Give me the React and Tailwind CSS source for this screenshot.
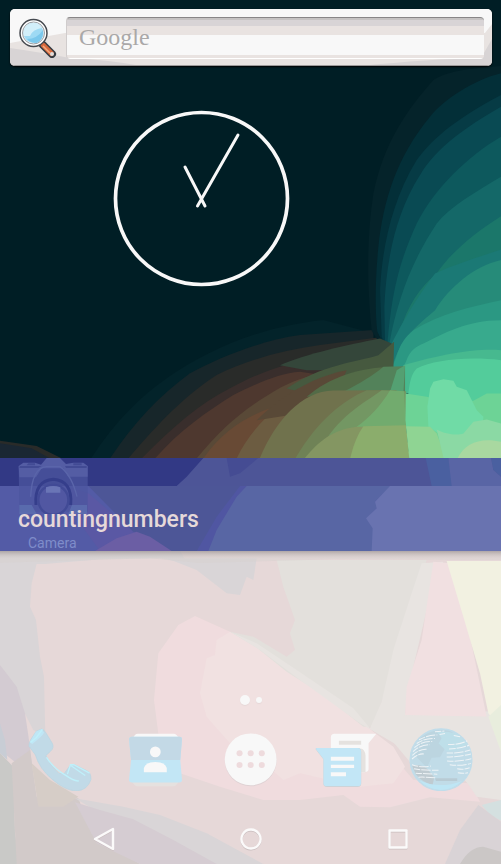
import React from "react";

const teal = [
  ["#05232a", "M603 18 C500 26 440 34 400 60 C320 150 250 250 220 400 C195 560 205 720 215 812 L290 930 L603 860Z"],
  ["#032f38", "M603 40 C520 60 430 120 390 170 C290 290 250 420 235 560 C225 660 225 760 232 815 L290 930 L603 860Z"],
  ["#063b45", "M603 105 C480 170 400 230 350 300 C270 430 245 580 240 690 L245 830 L290 930 L603 860Z"],
  ["#094a53", "M603 140 C500 200 410 260 360 345 C280 470 258 620 253 740 L255 850 L290 930 L603 860Z"],
  ["#0d595d", "M603 230 C500 290 400 390 350 490 C290 620 273 720 262 850 L290 930 L603 880Z"],
  ["#146868", "M603 350 C520 400 450 440 410 490 C330 610 290 730 268 850 L290 930 L603 900Z"],
  ["#1b776a", "M603 468 C520 520 450 580 410 640 C360 680 320 740 300 815 L603 880Z"],
  ["#1b7975", "M603 568 C540 590 470 610 405 640 C350 710 300 800 275 850 L275 925 L603 920Z"],
  ["#268b79", "M603 600 C520 620 450 680 405 750 C360 790 300 830 275 925 L603 930Z"],
  ["#2b9883", "M603 720 C510 740 420 760 340 810 C290 850 295 890 275 922 L603 930Z"],
  ["#38aa8d", "M603 780 C500 780 430 820 370 850 C320 870 325 900 310 918 L603 940Z"],
  ["#47b98f", "M603 870 C520 865 440 880 310 915 L308 1000 L603 1000Z"],
  ["#53cc9b", "M603 900 C500 888 400 900 350 925 C325 950 325 1000 318 1080 L330 1200 L603 1200Z"],
];

const earth = [
  ["#03232a", "M270 420 C340 310 420 230 500 175 C620 90 780 20 970 0 L1120 40 V420Z"],
  ["#17262a", "M330 415 C400 310 480 225 570 160 C660 110 790 60 900 45 L1120 30 V415Z"],
  ["#292b29", "M385 415 C450 340 540 235 650 165 C740 120 850 90 960 75 L1150 50 V415Z"],
  ["#392e2c", "M425 415 C520 320 600 250 690 205 C780 155 860 130 960 110 L1130 85 V415Z"],
  ["#4e382f", "M465 415 C540 330 620 275 700 225 C780 185 840 160 900 155 L1000 170 L900 415Z"],
  ["#594937", "M590 415 C660 330 720 275 820 215 C880 180 960 150 1080 145 L1060 415Z"],
  ["#684a35", "M610 415 C670 330 740 290 810 265 L940 210 L890 415Z"],
  ["#6c5c41", "M710 415 C750 330 830 250 900 225 L1010 185 L940 415Z"],
];

const junction = [
  ["#34463a", "M-60 915 C20 880 140 855 240 835 L275 850 L260 930 L20 930Z"],
  ["#46593f", "M-40 985 C60 915 170 905 235 885 L282 845 L280 930 L150 1000 L20 1000Z"],
  ["#594937", "M-130 1080 C-40 990 60 945 140 930 L110 1000 L0 1060Z"],
  ["#536b47", "M20 1010 C90 950 180 922 278 920 L285 1000Z"],
  ["#53825a", "M130 995 C180 970 220 945 250 920 L315 918 L315 1000Z"],
  ["#54a072", "M270 995 L290 930 L315 915 L310 1000Z"],
  ["#70724d", "M-125 1205 C-80 1090 0 993 100 991 L250 990 L200 1080 L90 1205Z"],
  ["#6f8256", "M-20 1205 C50 1080 130 1020 200 990 L290 990 L240 1110 L90 1205Z"],
  ["#739763", "M60 1170 C110 1070 190 1030 245 990 L318 993 L318 1110 L120 1200Z"],
  ["#72ab6e", "M170 1100 C210 1070 240 1040 270 990 L312 993 L318 1110 L180 1120Z"],
  ["#849662", "M5 1205 C50 1150 90 1110 170 1100 L220 1100 L200 1205Z"],
  ["#8bad6c", "M148 1205 C160 1150 175 1120 190 1098 L318 1095 L330 1205Z"],
  ["#6dd396", "M317 1000 L380 1010 L430 1020 L520 1022 L560 1000 L603 1000 V1200 H330 L316 1080Z"],
  ["#70dba6", "M385 1100 L382 1040 L390 985 L400 965 L430 957 L460 962 L470 980 L500 990 L515 1020 L530 1050 L550 1070 L545 1120 L430 1130Z"],
  ["#8fd493", "M318 1098 L390 1100 L410 1120 L440 1200 H328Z"],
  ["#8bd9a4", "M410 1108 C440 1125 475 1125 490 1120 L520 1085 L560 1078 L603 1090 V1200 H432Z"],
  ["#a9d8a0", "M470 1200 C490 1150 540 1130 603 1145 V1200Z"],
];

function NightWallpaper() {
  return (
    <svg aria-hidden="true" className="absolute inset-0 h-full w-full" viewBox="0 0 501 458" preserveAspectRatio="none">
      <rect width="501" height="458" fill="#001e25" />
      <g transform="translate(0 320) scale(.3334)">
        {earth.map(([c, d]) => <path key={c} fill={c} d={d} />)}
        <path fill="#292b29" d="M0 362 L110 378 L185 415 H0Z" />
        <path fill="#1a2733" d="M0 370 L95 385 L150 415 H0Z" />
      </g>
      <g transform="translate(300 60) scale(.3335)">
        {teal.map(([c, d]) => <path key={c} fill={c} d={d} />)}
        {junction.map(([c, d]) => <path key={c} fill={c} d={d} />)}
      </g>
    </svg>
  );
}

function DayWallpaper() {
  return (
    <svg aria-hidden="true" className="absolute inset-0 h-full w-full" viewBox="0 3 1503 939" preserveAspectRatio="none">
      <defs>
        <linearGradient id="bannerShadow" x2="0" y2="1">
          <stop stopColor="#8f8787" stopOpacity=".6" />
          <stop offset="1" stopColor="#c9c2c1" stopOpacity="0" />
        </linearGradient>
      </defs>
      <rect width="1503" height="942" fill="#e6d8d8" />
      <path fill="#d9d5d7" d="M0 0 H540 L560 40 L110 42 L95 100 L90 170 L108 210 L120 320 L132 380 L136 560 L100 540 L0 345Z" />
      <path fill="#e6d8d8" d="M110 44 L300 28 L480 25 L560 40 L620 90 H100Z" />
      <path fill="#d3cbd2" d="M0 345 L50 410 L75 490 L90 590 L100 680 L0 600Z" />
      <path fill="#c8cdd5" d="M0 520 L15 570 L22 630 L0 610Z" />
      <path fill="#c9c9c7" d="M0 610 L40 650 L45 850 L60 942 H0Z" />
      <path fill="#d2cac9" d="M35 640 L90 600 L110 740 L235 745 L275 850 L420 942 H50Z" />
      <path fill="#d6cdc7" d="M95 640 L150 690 L235 740 L190 770 L115 770Z" />
      <path fill="#d9d5d7" d="M225 745 L370 770 L480 795 L620 850 L790 942 H560 L400 850Z" />
      <path fill="#d5ccd2" d="M225 757 L300 780 L400 808 L520 870 L650 942 H420 L290 880Z" />
      <path fill="#d9d5d7" d="M500 25 H770 L760 90 L740 80 L720 135 L680 130 L590 60Z" />
      <path fill="#f0dcde" d="M585 198 L690 245 L900 390 L1110 535 L1240 690 L1410 700 L1440 755 L1290 742 L1170 772 L1080 770 L1030 735 L900 750 L790 750 L660 710 L540 670 L480 590 L462 450 L475 310 L535 225Z" />
      <path fill="#f1e1e1" d="M690 245 L790 305 L960 425 L1100 530 L1180 590 L1215 650 L1180 700 L1080 710 L990 690 L900 670 L850 690 L760 610 L690 580 L620 500 L600 430 L620 325 L645 315 L650 270Z" />
      <path fill="#e3e0dc" d="M830 30 H1280 L1225 190 L1180 350 L1120 530 L1090 530 L970 435 L860 365 L760 285 L690 245 L760 260 L860 320 L885 300 L870 250 L885 210 L850 110Z" />
      <path fill="#e8e4e1" d="M690 245 L770 280 L890 360 L1060 475 L1110 535 L1145 455 L1180 300 L1235 130 L1265 40 L1330 35 L1280 180 L1240 350 L1215 490 L1300 500 L1503 480 V740 L1420 720 L1360 650 L1200 590 L1080 520 L900 390 L780 300Z" />
      <path fill="#f1e0e1" d="M1300 35 L1350 40 L1410 260 L1460 500 L1215 497 L1220 410 L1265 270Z" />
      <path fill="#e8e4e1" d="M1170 565 L1215 495 L1460 500 L1503 610 V750 L1430 740 L1390 680 L1250 660Z" />
      <path fill="#f2f1e1" d="M1340 33 H1503 V540 L1465 490 L1440 370 L1390 200Z" />
      <path fill="#e8eddd" d="M1465 500 L1503 465 V605Z" />
      <path fill="#d4e0e0" d="M1445 765 L1503 750 V812 L1470 795Z" />
      <path fill="#d9d3d6" d="M1335 942 L1380 840 L1435 765 L1503 815 V942Z" />
      <path fill="#cbc7c6" d="M1380 942 Q1410 890 1450 890 L1503 905 V942Z" />
      <path fill="#d8d1cf" d="M0 3 H1503 V30 L1000 28 L600 39 L450 25 L0 38Z" opacity=".5" />
      <rect y="3" width="1503" height="24" fill="url(#bannerShadow)" />
    </svg>
  );
}

function SearchBar() {
  return (
    <form role="search" onSubmit={(e) => e.preventDefault()} className="relative ml-[10px] mr-[9px] mt-[9px] flex h-[57px] items-center overflow-hidden rounded-[5px] bg-[#e8e3e1] pl-2 pr-2 shadow-[0_1px_2px_#000]">
      <svg aria-hidden="true" className="absolute inset-0 h-full w-full" viewBox="0 0 482 57" preserveAspectRatio="none">
        <path fill="#f8f8f8" d="M0 0 H482 V15 L475 24 H55 L0 34Z" />
        <path fill="#d8d4d5" d="M0 39 Q28 43 60 49 Q100 51 132 57 H0Z M350 57 Q420 50 471 49 L482 30 V57Z" />
        <path stroke="#9c9999" d="M0 56.5 H482" />
      </svg>
      <button type="submit" aria-label="Search" className="relative h-10 w-10 shrink-0">
        <svg viewBox="0 0 40 40" className="h-10 w-10">
          <path d="M25 27 34 36" stroke="#343a40" strokeWidth="8" strokeLinecap="round" />
          <path d="m25 27 8.500 8.500" stroke="#d8693c" strokeWidth="5" strokeLinecap="round" />
          <path d="m25 28 7 7" stroke="#f4aa80" strokeWidth="1.500" />
          <circle cx="34" cy="36" r="2" fill="#ddd" />
          <circle cx="15.500" cy="15" r="13.500" fill="#fff" stroke="#464a50" strokeWidth="1.500" />
          <circle cx="15.500" cy="15" r="11" fill="#e9edef" stroke="#999ea3" strokeWidth="1" />
          <circle cx="15.500" cy="15" r="10" fill="#9edaf4" />
          <path d="M6 18 Q4 7 14 5 Q21 4 24 10 Q15 11 12 18Z" fill="#d2effa" />
          <path d="M9 21 Q19 21 25 12 Q26 21 19 25 Q12 25 9 21Z" fill="#7bc8ec" />
        </svg>
      </button>
      <input
        aria-label="Google search"
        placeholder="Google"
        className="relative ml-2 h-[42px] min-w-0 flex-1 rounded-[4px] border-t border-l border-t-[#888687] border-l-[#d0cccc] bg-[linear-gradient(#c6c3c3_0px,#c6c3c3_2px,#d8d4d6_2px,#d8d4d6_8px,#e9e3e1_8px,#e9e3e1_17px,#f8f8f8_17px,#f8f8f8_37px,#e9e3e1_37px,#e9e3e1_40px,#ffffff_40px)] pb-0.5 pl-3 font-['Liberation_Serif',serif] text-2xl text-[#888] outline-none placeholder:text-[#aaa8a8] placeholder:opacity-100"
      />
    </form>
  );
}

function Clock() {
  return (
    <svg role="img" aria-label="Analog clock" className="relative ml-[113px] mt-[44px] h-[177px] w-[177px]" viewBox="0 0 177 177" fill="none" stroke="#f8f8f8" strokeLinecap="round">
      <circle cx="88.500" cy="88.500" r="86" strokeWidth="3.700" />
      <path d="M72 57 92 96 M125 25 84.500 96" strokeWidth="3" />
    </svg>
  );
}

function Banner() {
  return (
    <header className="relative z-10 overflow-hidden bg-[#5056a2]">
      <svg aria-hidden="true" className="absolute inset-0 h-full w-full" viewBox="0 24 1503 279" preserveAspectRatio="none">
        <path fill="#535ba6" d="M0 108 H540 L420 303 H0Z" />
        <path fill="#5a58a4" d="M190 108 L265 130 L330 185 L400 245 L510 303 H300 L240 220Z" />
        <path fill="#4d5697" d="M265 108 H720 L650 200 L590 303 H510 L400 245Z" />
        <path fill="#6b5ea4" d="M285 303 L350 265 L410 245 L450 260 L515 303Z" />
        <path fill="#5866a4" d="M740 108 H1175 L1150 130 L1125 155 L1135 170 L1100 205 L1120 225 V303 H625 L650 240 L710 140Z" />
        <path fill="#6973b0" d="M1170 108 H1503 V303 H1115 L1118 235 L1098 205 L1130 175 L1125 155Z" />
        <path fill="#323985" d="M0 24 H1503 V108 H0Z" />
        <path fill="#4d5597" d="M610 24 H1503 V108 H530 L560 80Z" />
        <path fill="#454c93" d="M680 24 H775 L720 70 L690 80Z" />
        <path fill="#4a60a0" d="M1277 24 H1345 L1360 108 H1295Z M1473 24 H1503 V80 L1480 60Z" />
        <path fill="#5965a5" d="M1345 24 H1473 L1480 60 L1503 80 V108 H1355Z" />
      </svg>
      <svg aria-hidden="true" className="absolute left-[18px] top-0 h-[56px] w-[70px]" viewBox="54 24 210 168" preserveAspectRatio="none">
        <path fill="#4c569f" d="M56 48 H263 V185 H58Z" opacity=".75" />
        <path fill="#545da4" d="M56 48 L70 38 H105 L123 44 L140 24 H180 L198 42 L220 38 H250 L263 48 V80 H204 L190 55 H125 L108 82 H58Z" />
        <path fill="#424b94" d="M60 48 H125 L115 54 H58Z M195 48 H260 V54 H198Z M85 40h20v6H80Z M220 40h25v6h-25Z" />
        <path fill="none" stroke="#5a65aa" strokeWidth="4" d="M92 140 Q96 54 139 50 H180 Q215 75 231 140" />
        <path fill="none" stroke="#353e8b" strokeWidth="9" d="M108 165 Q102 92 160 88 Q218 92 212 165" />
        <circle cx="160" cy="150" r="45" fill="#5157a2" stroke="#414a96" strokeWidth="7" />
        <path fill="#6a75b6" d="M138 112 Q160 104 181 112 V128 H138Z" />
        <path fill="#5e72b2" d="M58 165 H95 L110 192 H58Z M216 165 H261 V192 H205Z" opacity=".75" />
      </svg>
      <span className="absolute left-7 top-[77px] text-sm leading-4 text-[#7f8dca]">Camera</span>
      <div className="h-7" />
      <h1 className="relative flex h-[65px] items-center pl-[18px] pt-1 text-[23px] font-medium text-[#e6d9d9]">countingnumbers</h1>
    </header>
  );
}

function PhoneIcon() {
  return (
    <svg viewBox="0 0 190 190" className="h-16 w-16">
      <path d="M40 6 Q47 7 53 17 L72 48 Q79 62 66 73 L53 85 Q64 112 91 137 L107 139 L125 114 Q132 109 142 114 L177 131 Q187 136 187 156 Q177 187 145 190 Q113 190 76 159 Q34 125 22 83 L3 57 Q2 48 8 38 L24 13Z" fill="#c1dae7" stroke="#b9d5e1" strokeWidth="2" />
      <path d="M40 6 L24 13 L6 43 L12 51 L28 38 Q42 27 48 17Z" fill="#bfe6f5" />
      <path d="m7 46 18-15 18-24 M117 140 126 112 136 112 183 137 M55 90 Q75 122 111 143 Q138 162 151 160 M128 115 L170 144" fill="none" stroke="#bff0fa" strokeWidth="4" />
    </svg>
  );
}

function ContactsIcon() {
  return (
    <svg viewBox="0 0 190 190" className="h-16 w-16">
      <path d="M30 34 Q34 20 44 20 H150 Q160 20 166 34Z" fill="#f8f8f8" />
      <path d="M26 160 H166 Q158 176 150 176 H42 Q34 176 26 160Z" fill="#e5e1df" />
      <path d="M18 38 Q17 29 27 29 H168 Q176 29 175 38 L170 98 L175 155 Q176 165 167 165 H27 Q17 165 18 155 L24 98Z" fill="#c2e6f5" />
      <path d="M18 38 Q17 29 27 29 H168 Q176 29 175 38 L170 98 H24Z" fill="#c3d9e6" />
      <circle cx="96" cy="74" r="16" fill="#f8f8f8" />
      <path d="M62 134 V122 Q67 104 96 104 T130 122 V134Z" fill="#f8f8f8" />
    </svg>
  );
}

function DrawerIcon() {
  return (
    <svg viewBox="0 0 190 190" className="h-16 w-16">
      <circle cx="97" cy="99" r="77" fill="#dfd2d4" />
      <circle cx="97" cy="96" r="77" fill="#f8f8f8" />
      {[64, 97, 130].map((x) => [78, 113].map((y) => <circle key={`${x}-${y}`} cx={x} cy={y} r="9" fill="#eedbdd" />))}
    </svg>
  );
}

function MessagesIcon() {
  return (
    <svg viewBox="0 0 190 190" className="h-16 w-16">
      <path d="M50 75 V31 Q50 20 61 20 H185 L162 48 V125 Q162 134 151 134 H130Z" fill="#f8f8f8" />
      <path d="M74 41 H140 V53 H74Z M125 64 H138 Q151 65 153 85 V134 H139Z" fill="#e5e2df" />
      <path d="M5 66 Q5 62 9 62 H130 Q140 62 140 74 V168 Q140 178 129 178 H38 Q28 178 28 168 V96Z" fill="#d1cdce" />
      <path d="M5 65 Q5 62 9 62 H130 Q140 62 140 74 V166 Q140 176 129 176 H38 Q28 176 28 166 V95Z" fill="#c2e6f6" />
      <path d="M50 88 H119 V100 H50Z M50 112 H119 V122 H50Z M50 134 H95 V146 H50Z" fill="#f8f8f8" />
    </svg>
  );
}

function GlobeIcon() {
  return (
    <svg viewBox="0 0 190 190" className="h-16 w-16">
      <circle cx="95" cy="97" r="92" fill="#c1dce8" stroke="#c0ddeb" strokeWidth="3" />
      <path d="M35 31 Q75 0 121 12 L148 30 L117 45 L92 90 L67 91 L53 121 L17 83Z" fill="#bcd5e0" />
      <path d="M82 13 L97 33 L88 49 L112 72 L147 69 L174 49 L141 20 L118 15Z" fill="#bedfe9" />
      <path d="M9 114 Q35 109 55 125 L75 150 L70 172 Q40 165 20 140Z" fill="#bfcbd1" />
      <path d="M77 152 H143 V160 H80Z" fill="#b8cbd4" />
      <g fill="none" stroke="#eef3f6" strokeWidth="3" strokeDasharray="19 3 28 4">
        <path d="M30 38 Q58 23 84 24 M23 49 Q48 32 77 34 M16 61 Q40 41 69 43 M12 73 Q34 52 62 53 M10 84 Q31 65 52 66 M9 95 Q28 78 44 80" />
        <path d="M116 52 Q148 53 173 41 M119 65 Q154 64 178 54 M112 77 Q148 79 182 68 M112 89 Q150 89 184 80 M113 101 Q151 104 185 94 M121 112 Q154 117 184 108 M143 124 Q163 128 180 121 M145 136 Q161 139 175 136" />
        <path d="M9 112 Q34 121 65 116 M15 124 Q48 130 90 128 M20 137 Q46 139 84 140 M28 149 Q49 148 80 151" />
        <path d="M77 14 L105 12 M91 22 L107 19 M133 25 L152 29" />
      </g>
      <path d="M30 158 Q90 186 158 160 Q128 187 93 187 Q54 184 30 158Z" fill="#bee6f5" />
    </svg>
  );
}

const apps = [
  ["Phone", PhoneIcon],
  ["Contacts", ContactsIcon],
  ["All apps", DrawerIcon],
  ["Messages", MessagesIcon],
  ["Browser", GlobeIcon],
];

const keys = [
  ["Back", "M4 13 22 3 V23Z"],
  ["Home", "M13 3.500 a9.500 9.500 0 1 0 .01 0Z"],
  ["Overview", "M4.500 4.500 H21.500 V21.500 H4.500Z"],
];

export default function App() {
  return (
    <main className="flex min-h-screen flex-col font-['Roboto',sans-serif]">
      <section className="relative flex flex-col pb-[171px]">
        <NightWallpaper />
        <SearchBar />
        <Clock />
      </section>
      <Banner />
      <section className="relative flex flex-1 flex-col justify-end pt-10">
        <DayWallpaper />
        <div className="relative flex h-3 items-center justify-center gap-[6px]" aria-hidden="true">
          <span className="h-[10px] w-[10px] rounded-full bg-[#f8f8f8] shadow-[0_1px_1px_#e6d8d8]" />
          <span className="h-[6px] w-[6px] rounded-full bg-[#f8f8f8] shadow-[0_1px_1px_#e6d8d8]" />
        </div>
        <div className="relative mt-[21px] grid grid-cols-5 px-3">
          {apps.map(([name, Icon]) => (
            <button key={name} type="button" aria-label={name} className="flex justify-center"><Icon /></button>
          ))}
        </div>
        <nav aria-label="System" className="relative mt-[22px] grid h-[51px] grid-cols-3 px-[30px]">
          {keys.map(([name, d]) => (
            <button key={name} type="button" aria-label={name} className="flex items-center justify-center">
              <svg viewBox="0 0 26 26" className="h-[26px] w-[26px]" fill="none" strokeLinejoin="round">
                <path d={d} stroke="#c9bdbe" strokeWidth="2" transform="translate(0 1)" />
                <path d={d} stroke="#fbfafa" strokeWidth="2.400" />
              </svg>
            </button>
          ))}
        </nav>
      </section>
    </main>
  );
}
